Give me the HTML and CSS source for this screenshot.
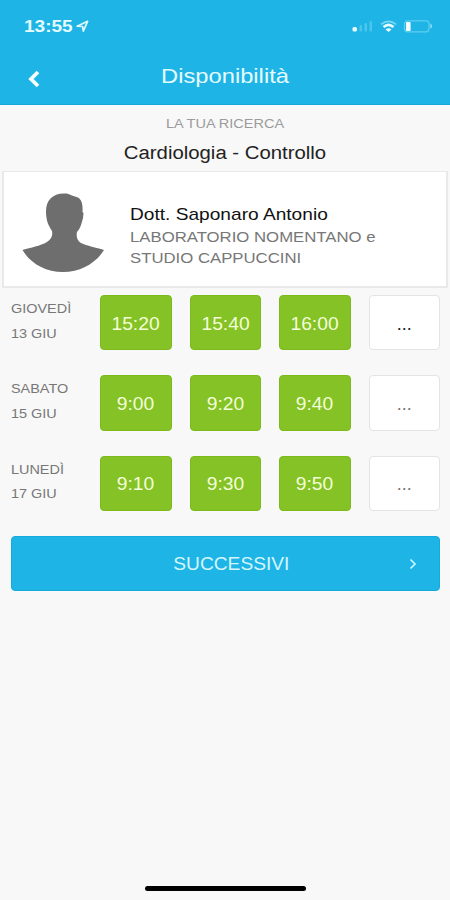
FILE: index.html
```html
<!DOCTYPE html>
<html lang="it">
<head>
    <meta charset="utf-8">
    <title>Disponibilità</title>
    <link rel="stylesheet" href="styles.css">
</head>
<body>
    <div class="screen">
        <div class="header">
            <div class="status-bar">
                <div class="clock">
                    <span>13:55</span>
                    <svg width="13" height="13" viewBox="0 0 13 13">
                        <path d="M1.2 6.2 L11.6 1.3 L7.3 11.2 L6.6 6.5 Z" fill="none" stroke="#dffaff" stroke-width="1.7" stroke-linejoin="round"/>
                    </svg>
                </div>
                <svg class="status-icons" width="84" height="16" viewBox="0 0 84 16">
                    <rect x="2.5" y="9" width="4.5" height="4.5" rx="1.5" fill="#e9fcff"/>
                    <rect x="9.5" y="7" width="2.5" height="6.5" rx="1" fill="#4cc5eb"/>
                    <rect x="14.5" y="5" width="2.5" height="8.5" rx="1" fill="#4cc5eb"/>
                    <rect x="19.5" y="3" width="2.5" height="10.5" rx="1" fill="#4cc5eb"/>
                    <path d="M31 6.4 Q38.5 0.4 46 6.4" fill="none" stroke="#7ad8f2" stroke-width="1.8"/>
                    <path d="M33.5 9 Q38.5 4.6 43.5 9" fill="none" stroke="#e9fcff" stroke-width="2.6"/>
                    <path d="M35.5 11.4 Q38.5 9 41.5 11.4 L38.5 14 Z" fill="#e9fcff"/>
                    <rect x="54.5" y="2.8" width="24.5" height="11" rx="3" fill="none" stroke="#5fcff0" stroke-width="1.2"/>
                    <rect x="56" y="4" width="4.6" height="9" rx="1" fill="#f4feff"/>
                    <path d="M80.4 5.6 Q84 8.2 80.4 10.8 Z" fill="#8fdff5"/>
                </svg>
            </div>
            <div class="nav-bar">
                <svg class="back" width="14" height="18" viewBox="0 0 14 18">
                    <path d="M11 2 L4 9 L11 16" fill="none" stroke="#f4feff" stroke-width="3.8"/>
                </svg>
                <h1>Disponibilità</h1>
            </div>
        </div>

        <div class="search">
            <p class="search-label">LA TUA RICERCA</p>
            <p class="search-text">Cardiologia - Controllo</p>
        </div>

        <div class="doctor">
            <svg class="avatar" width="82" height="80" viewBox="0 0 82 80">
                <path d="M42 0.5 C30 0.5 24 8 24 18 C24 27 26 32 30 38 C31 43 29 46 25 49 C18 53 9 54.5 0.5 57 C8 70 23 79 41 79 C59 79 74 70 82 57 C74 54.5 65 53 59 50 C55 47.5 54 43 55 39 C58 36 59.5 31 61 25 L61.5 20 L60.5 19 C61 12 60 7 56 4.5 C53 3 50 3 47 1.2 C45 0.5 44 0.5 42 0.5 Z" fill="#6e6e6e"/>
            </svg>
            <div class="doctor-info">
                <p class="doctor-name">Dott. Saponaro Antonio</p>
                <p>LABORATORIO NOMENTANO e</p>
                <p>STUDIO CAPPUCCINI</p>
            </div>
        </div>

        <div class="days">
            <div class="day">
                <div class="date">GIOVEDÌ<br>13 GIU</div>
                <a class="slot"><span>15:20</span></a>
                <a class="slot"><span>15:40</span></a>
                <a class="slot"><span>16:00</span></a>
                <a class="slot more first">...</a>
            </div>
            <div class="day">
                <div class="date">SABATO<br>15 GIU</div>
                <a class="slot"><span>9:00</span></a>
                <a class="slot"><span>9:20</span></a>
                <a class="slot"><span>9:40</span></a>
                <a class="slot more">...</a>
            </div>
            <div class="day">
                <div class="date">LUNEDÌ<br>17 GIU</div>
                <a class="slot"><span>9:10</span></a>
                <a class="slot"><span>9:30</span></a>
                <a class="slot"><span>9:50</span></a>
                <a class="slot more">...</a>
            </div>
        </div>

        <div class="next">
            <span>SUCCESSIVI</span>
            <svg width="8" height="12" viewBox="0 0 8 12">
                <path d="M1.5 1.5 L6 6 L1.5 10.5" fill="none" stroke="#c9f5ff" stroke-width="1.7"/>
            </svg>
        </div>

        <div class="home-bar"></div>
    </div>
</body>
</html>
```
FILE: styles.css
```css
body {
    margin: 0;
    background-color: #f8f8f8;
    font-family: "Liberation Sans", Arial, sans-serif;
}

p, h1 {
    margin: 0;
    font-weight: normal;
    white-space: nowrap;
}

.screen {
    display: flex;
    flex-direction: column;
    height: 900px;
    overflow: hidden;
}

.header {
    box-sizing: border-box;
    height: 105px;
    background-color: #1eb4e6;
    border-bottom: 1px solid #16a9dc;
    color: #e4fbff;
}

.status-bar {
    display: flex;
    justify-content: space-between;
    align-items: center;
    height: 52px;
    padding: 0 16px 0 24px;
}

.clock {
    display: flex;
    align-items: center;
    gap: 11px;
    font-size: 16px;
    font-weight: bold;
}

.clock span {
    padding-top: 1px;
    transform: scaleX(1.19);
    transform-origin: left;
}

.nav-bar {
    display: grid;
    grid-template-columns: 60px 1fr 60px;
    align-items: center;
    height: 48px;
}

.back {
    margin: 5px 0 0 27px;
}

.nav-bar h1 {
    font-size: 21px;
    text-align: center;
    transform: scaleX(1.13);
}

.search {
    height: 66px;
    text-align: center;
}

.search-label {
    padding-top: 10px;
    font-size: 13px;
    line-height: 18px;
    color: #9b9b9b;
    transform: scaleX(1.115);
}

.search-text {
    padding-top: 8px;
    font-size: 18px;
    line-height: 24px;
    color: #222;
    transform: scaleX(1.13);
}

.doctor {
    box-sizing: border-box;
    display: flex;
    height: 117px;
    margin: 0 2px;
    padding: 21px 0 0 18px;
    background-color: #fff;
    border: 2px solid #e9e9e9;
    border-top-width: 1px;
}

.doctor-info {
    padding: 11px 0 0 26px;
    font-size: 15.5px;
    line-height: 21.5px;
    color: #777;
}

.doctor-info p {
    transform: scaleX(1.08);
    transform-origin: left;
}

.doctor-info .doctor-name {
    font-size: 17px;
    color: #111;
    transform: scaleX(1.125);
}

.days {
    display: grid;
    gap: 25px;
    padding: 7px 10px 0 11px;
}

.day {
    display: grid;
    grid-template-columns: 71px repeat(4, 71.5px);
    gap: 18px;
    height: 55.4px;
}

.date {
    padding-top: 2px;
    font-size: 13px;
    line-height: 24.5px;
    color: #777;
    white-space: nowrap;
    transform: scaleX(1.11);
    transform-origin: left;
}

.slot {
    box-sizing: border-box;
    display: flex;
    align-items: center;
    justify-content: center;
    padding-top: 3px;
    border: 1px solid #7cba1c;
    border-radius: 4px;
    background-color: #84c225;
    color: #f3ffd9;
    font-size: 18px;
}

.slot span {
    transform: scaleX(1.07);
}

.slot.more {
    border: 1px solid #e4e4e4;
    background-color: #fff;
    color: #777;
}

.slot.more.first {
    color: #222;
}

.next {
    box-sizing: border-box;
    display: grid;
    grid-template-columns: 30px 1fr 30px;
    align-items: center;
    height: 55px;
    margin: 25px 10px 0 11px;
    border: 1px solid #16a9dc;
    border-radius: 4px;
    background-color: #1eb4e6;
    color: #d4f7ff;
    font-size: 18px;
}

.next span {
    grid-column: 2;
    padding: 2px 0 0 11px;
    text-align: center;
    transform: scaleX(1.065);
}

.home-bar {
    width: 161px;
    height: 5px;
    margin: auto auto 9px 145px;
    border-radius: 3px;
    background-color: #000;
}
```
